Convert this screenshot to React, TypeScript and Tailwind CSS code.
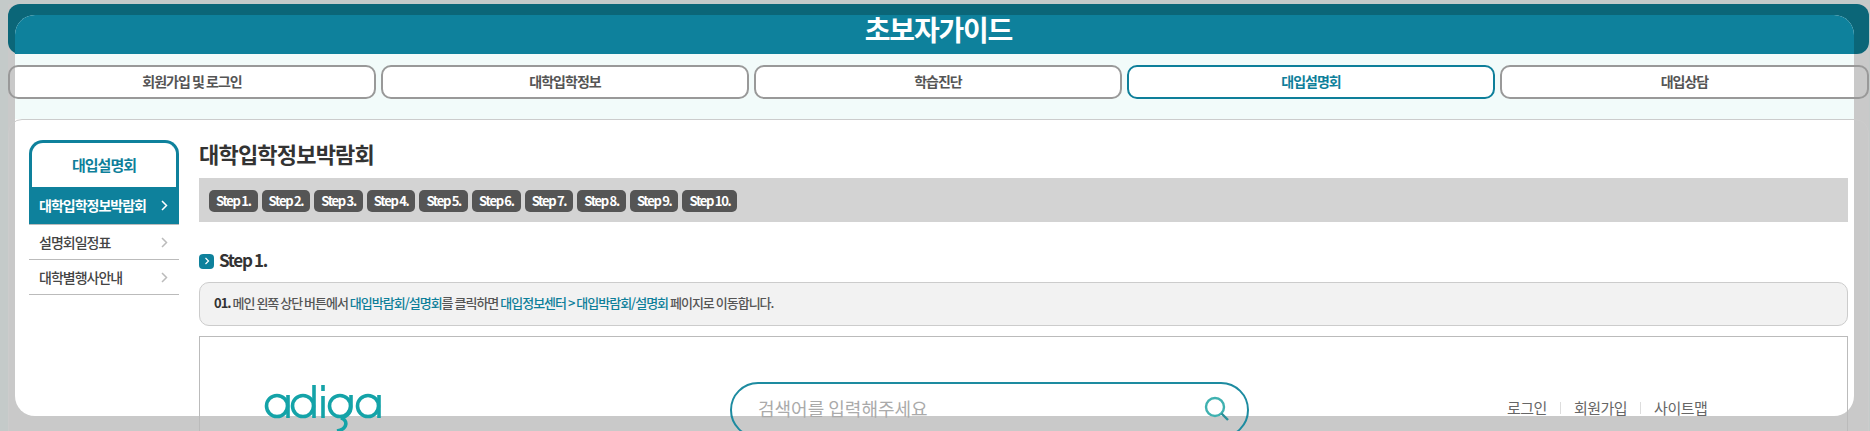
import React from 'react';

const FONT = "font-['Noto_Sans_CJK_KR','Noto_Sans',sans-serif]";

const tabs = ['회원가입 및 로그인', '대학입학정보', '학습진단', '대입설명회', '대입상담'];
const steps = ['Step 1.', 'Step 2.', 'Step 3.', 'Step 4.', 'Step 5.', 'Step 6.', 'Step 7.', 'Step 8.', 'Step 9.', 'Step 10.'];

function Chevron({ className }: { className: string }) {
  return (
    <svg width="7" height="11" viewBox="0 0 7 11" fill="none" className={className}>
      <path d="M1 1 L5.5 5.5 L1 10" stroke="currentColor" strokeWidth="1.5" />
    </svg>
  );
}

function Logo() {
  return (
    <svg width="120" height="50" viewBox="0 0 120 50" fill="none" stroke="#14a3a8" strokeWidth="3.6" className="shrink-0">
      <circle cx="13" cy="23" r="10.5" />
      <path d="M24 12 V35" />
      <circle cx="39" cy="23" r="10.5" />
      <path d="M50 2 V35" />
      <path d="M59 2 V8 M59 13 V35" />
      <circle cx="76" cy="23" r="10.5" />
      <path d="M87 12 V24 C87 30 82 34 77 35 C84 37 84 46 73 48" />
      <circle cx="104" cy="23" r="10.5" />
      <path d="M115 12 V35" />
    </svg>
  );
}

export default function App() {
  return (
    <div className={`h-[431px] w-[1870px] overflow-hidden bg-[#c4cac9] pt-1 pl-2 pr-px ${FONT}`}>
      <div className="relative h-[427px] bg-[#c9c9c9]">
        {/* header strip and the white panel sit behind the content */}
        <div className="absolute inset-x-0 top-0 h-[50px] rounded-[12px] bg-[#0b6678]" />
        <div className="absolute left-[7px] right-[15px] top-[11px] h-[401px] overflow-hidden rounded-[20px] bg-white">
          <div className="h-[39px] bg-[#0e819c]" />
          <div className="h-[65px] bg-[#f2fbfa]" />
        </div>

        <div className="relative">
          <h1 className="flex h-[50px] items-center justify-center pb-[1px] text-[28px] font-bold tracking-[-1.2px] text-white">
            초보자가이드
          </h1>

          <div className="mt-[11px] grid grid-cols-[repeat(4,368px)_1fr] gap-[5px]">
            {tabs.map((tab, i) => (
              <div
                key={tab}
                className={`flex h-[34px] items-center justify-center rounded-[10px] border-2 pb-[1px] text-[14px] font-bold tracking-[-1px] ${
                  i === 3 ? 'border-[#0e7f9a] text-[#0e7f9a]' : 'border-[#999] text-[#555]'
                } ${
                  i === 0
                    ? 'bg-[linear-gradient(90deg,#c9c9c9_5px,#fff_5px)]'
                    : i === 4
                      ? 'bg-[linear-gradient(270deg,#c9c9c9_13px,#fff_13px)]'
                      : 'bg-white'
                }`}
              >
                {tab}
              </div>
            ))}
          </div>

          <div className="mt-[20px] flex h-[340px] gap-[20px] rounded-[14px] border border-[#ccc] px-[20px] pt-[20px]">
            <aside className="w-[150px] shrink-0">
              <div className="flex h-[47px] items-center justify-center rounded-t-[14px] border-x-[3px] border-t-[3px] border-[#0e819c] bg-white text-[15px] font-bold tracking-[-1px] text-[#0e7f9a]">
                대입설명회
              </div>
              <div className="flex h-[38px] items-center justify-between border-b border-[#bbb] bg-[#0e819c] pl-[10px] pr-[11px] text-[14px] font-bold tracking-[-1px] text-white">
                대학입학정보박람회
                <Chevron className="text-white" />
              </div>
              <div className="flex h-[35px] items-center justify-between border-b border-[#bbb] pl-[10px] pr-[11px] text-[14px] font-medium tracking-[-1px] text-[#444]">
                설명회일정표
                <Chevron className="text-[#bbb]" />
              </div>
              <div className="flex h-[35px] items-center justify-between border-b border-[#bbb] pl-[10px] pr-[11px] text-[14px] font-medium tracking-[-1px] text-[#444]">
                대학별행사안내
                <Chevron className="text-[#bbb]" />
              </div>
            </aside>

            <main className="min-w-0 flex-1">
              <h2 className="h-[38px] text-[22px] leading-[26px] font-bold tracking-[-0.8px] text-[#333]">
                대학입학정보박람회
              </h2>
              <div className="flex h-[44px] items-center gap-[4px] bg-[#d3d3d3] pl-[10px] pt-[2px]">
                {steps.map((step) => (
                  <span
                    key={step}
                    className="flex h-[22px] items-center rounded-[5px] bg-[#555] px-[7px] text-[13px] font-bold tracking-[-1.3px] text-white"
                  >
                    {step}
                  </span>
                ))}
              </div>

              <div className="mt-[31px] flex h-[16px] items-center gap-[5px]">
                <span className="flex size-[15px] items-center justify-center rounded-[4px] bg-[#0e819c] text-white">
                  <svg width="6" height="8" viewBox="0 0 6 8" fill="none">
                    <path d="M1.5 1 L4.5 4 L1.5 7" stroke="currentColor" strokeWidth="1.2" />
                  </svg>
                </span>
                <span className="pb-[2px] text-[17px] font-bold tracking-[-1.3px] text-[#333]">Step 1.</span>
              </div>

              <p className="mt-[13px] flex h-[44px] items-center whitespace-pre rounded-[10px] border border-[#ccc] bg-[#f2f2f2] pb-[2px] pl-[14px] text-[13px] font-medium tracking-[-1px] text-[#555]">
                <b className="font-bold text-[#333]">01. </b>
                메인 왼쪽 상단 버튼에서 <span className="text-[#0e7f9a]">대입박람회/설명회</span>를 클릭하면{' '}
                <span className="text-[#0e7f9a]">대입정보센터 &gt; 대입박람회/설명회</span> 페이지로 이동합니다.
              </p>

              <div className="mt-[10px] flex h-[120px] items-start border border-[#bbb] pt-[45px]">
                <div className="ml-[64px] mt-[1px]">
                  <Logo />
                </div>
                <div className="ml-[346px] flex h-[56px] w-[519px] shrink-0 items-center justify-between rounded-full border-[2.5px] border-[#1d8ba0] pl-[26px] pr-[16px]">
                  <span className="pb-[3px] text-[18px] text-[#aaa]">검색어를 입력해주세요</span>
                  <svg width="28" height="28" viewBox="0 0 28 28" fill="none" stroke="#3fb1b0" strokeWidth="2.4" className="mb-[3px]">
                    <circle cx="12" cy="12" r="9" />
                    <path d="M18.5 18.5 L25 25" stroke="#2a8f98" />
                  </svg>
                </div>
                <div className="ml-[258px] mt-[15px] flex items-center text-[15px] tracking-[-0.5px] text-[#666]">
                  <span>로그인</span>
                  <span className="mx-[13px] h-[12px] w-px bg-[#ddd]" />
                  <span>회원가입</span>
                  <span className="mx-[13px] h-[12px] w-px bg-[#ddd]" />
                  <span>사이트맵</span>
                </div>
              </div>
            </main>
          </div>
        </div>
      </div>
    </div>
  );
}
